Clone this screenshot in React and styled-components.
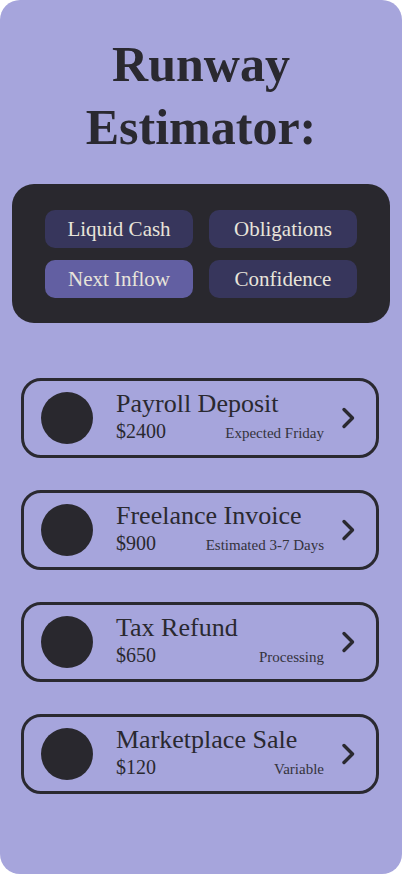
import React from "react";
import styled, { createGlobalStyle } from "styled-components";

const GlobalStyle = createGlobalStyle`
  html, body { margin: 0; padding: 0; background: #ffffff; }
  * { box-sizing: border-box; }
`;

const Screen = styled.div`
  width: 402px;
  height: 874px;
  background: #a6a5dc;
  border-radius: 20px;
  overflow: hidden;
  display: flex;
  flex-direction: column;
  font-family: "Liberation Serif", "DejaVu Serif", serif;
  color: #2a2930;
`;

const Title = styled.h1`
  margin: 33px 0 0;
  text-align: center;
  font-size: 50px;
  line-height: 63px;
  font-weight: 700;
  color: #2a2930;
`;

const Panel = styled.div`
  margin: 25px 12px 0;
  padding: 26px 33px 25px;
  background: #29282e;
  border-radius: 22px;
  display: grid;
  grid-template-columns: 1fr 1fr;
  gap: 12px 16px;
`;

const Chip = styled.button`
  height: 38px;
  border: none;
  border-radius: 10px;
  background: ${(p) => (p.$active ? "#625fa2" : "#37365c")};
  color: #e8e4da;
  font-family: inherit;
  font-size: 21px;
  padding: 0;
  display: flex;
  align-items: center;
  justify-content: center;
`;

const List = styled.div`
  margin: 55px 0 0 21px;
  width: 358px;
  display: flex;
  flex-direction: column;
  gap: 32px;
`;

const Card = styled.div`
  height: 80px;
  border: 3px solid #2a2930;
  border-radius: 20px;
  display: flex;
  align-items: center;
  padding: 0 20px 0 17px;
`;

const Avatar = styled.div`
  width: 52px;
  height: 52px;
  border-radius: 50%;
  background: #29282e;
  flex-shrink: 0;
`;

const Info = styled.div`
  flex: 1;
  margin-left: 23px;
  display: flex;
  flex-direction: column;
`;

const Name = styled.div`
  font-size: 26px;
  line-height: 28px;
  white-space: nowrap;
`;

const Meta = styled.div`
  display: flex;
  justify-content: space-between;
  align-items: baseline;
  line-height: 26px;
`;

const Amount = styled.span`
  font-size: 20px;
`;

const Note = styled.span`
  font-size: 15px;
  color: #34333c;
`;

const Chevron = styled.svg`
  width: 16px;
  height: 24px;
  margin-left: 16px;
  flex-shrink: 0;
`;

const chips = [
  { label: "Liquid Cash" },
  { label: "Obligations" },
  { label: "Next Inflow", active: true },
  { label: "Confidence" },
];

const inflows = [
  { name: "Payroll Deposit", amount: "$2400", note: "Expected Friday" },
  { name: "Freelance Invoice", amount: "$900", note: "Estimated 3-7 Days" },
  { name: "Tax Refund", amount: "$650", note: "Processing" },
  { name: "Marketplace Sale", amount: "$120", note: "Variable" },
];

export default function App() {
  return (
    <>
      <GlobalStyle />
      <Screen>
        <Title>
          Runway
          <br />
          Estimator:
        </Title>
        <Panel>
          {chips.map((c) => (
            <Chip key={c.label} $active={c.active}>
              {c.label}
            </Chip>
          ))}
        </Panel>
        <List>
          {inflows.map((item) => (
            <Card key={item.name}>
              <Avatar />
              <Info>
                <Name>{item.name}</Name>
                <Meta>
                  <Amount>{item.amount}</Amount>
                  <Note>{item.note}</Note>
                </Meta>
              </Info>
              <Chevron viewBox="0 0 16 24" fill="none">
                <path
                  d="M4 3.5 L12.5 12 L4 20.5"
                  stroke="#2a2930"
                  strokeWidth="3.4"
                  strokeLinecap="round"
                  strokeLinejoin="round"
                />
              </Chevron>
            </Card>
          ))}
        </List>
      </Screen>
    </>
  );
}
